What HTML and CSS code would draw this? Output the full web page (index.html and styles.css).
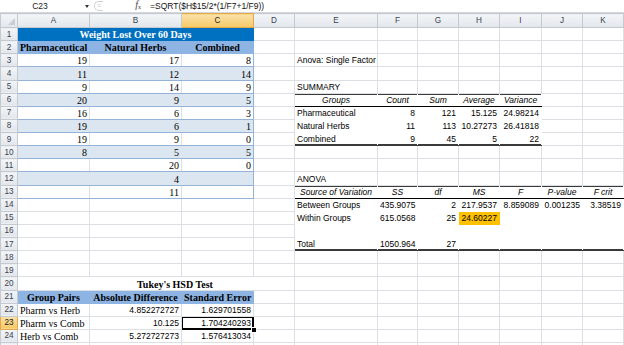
FILE: index.html
```html
<!DOCTYPE html>
<html>
<head>
<meta charset="UTF-8">
<title>Weight Lost Over 60 Days - ANOVA</title>
<link rel="stylesheet" href="styles.css">
</head>
<body>
<div class="fbar">
	<div class="namebox">C23<span class="drop"></span></div>
	<div class="fbtns"><span class="knob">=</span><span class="fx"><i>f</i><sub>x</sub></span></div>
	<div class="formula">=SQRT($H$15/2*(1/F7+1/F9))</div>
</div>
<table class="sheet">
	<colgroup>
		<col class="c-rh"><col class="c-a"><col class="c-b"><col class="c-c"><col class="c-d"><col class="c-e">
		<col class="c-f"><col class="c-n"><col class="c-n"><col class="c-i"><col class="c-n"><col class="c-n"><col class="c-l">
	</colgroup>
	<tr class="colhead">
		<th class="corner"></th><th>A</th><th>B</th><th class="sel">C</th><th>D</th><th>E</th><th>F</th><th>G</th><th>H</th><th>I</th><th>J</th><th>K</th><th></th>
	</tr>
	<tr>
		<th>1</th><td colspan="3" class="title">Weight Lost Over 60 Days</td><td></td><td></td><td></td><td></td><td></td><td></td><td></td><td></td><td></td>
	</tr>
	<tr>
		<th>2</th><td class="hd">Pharmaceutical</td><td class="hd">Natural Herbs</td><td class="hd">Combined</td><td></td><td></td><td></td><td></td><td></td><td></td><td></td><td></td><td></td>
	</tr>
	<tr>
		<th>3</th><td class="bw">19</td><td class="bw">17</td><td class="bw end">8</td><td></td><td class="txt">Anova: Single Factor</td><td></td><td></td><td></td><td></td><td></td><td></td><td></td>
	</tr>
	<tr>
		<th>4</th><td class="bb">11</td><td class="bb">12</td><td class="bb end">14</td><td></td><td></td><td></td><td></td><td></td><td></td><td></td><td></td><td></td>
	</tr>
	<tr>
		<th>5</th><td class="bw">9</td><td class="bw">14</td><td class="bw end">9</td><td></td><td class="txt">SUMMARY</td><td></td><td></td><td></td><td></td><td></td><td></td><td></td>
	</tr>
	<tr>
		<th>6</th><td class="bb">20</td><td class="bb">9</td><td class="bb end">5</td><td></td>
		<td class="rh">Groups</td><td class="rh">Count</td><td class="rh">Sum</td><td class="rh">Average</td><td class="rh">Variance</td><td></td><td></td><td></td>
	</tr>
	<tr>
		<th>7</th><td class="bw">16</td><td class="bw">6</td><td class="bw end">3</td><td></td>
		<td class="rt txt">Pharmaceutical</td><td class="rt">8</td><td class="rt">121</td><td class="rt">15.125</td><td class="rt">24.98214</td><td></td><td></td><td></td>
	</tr>
	<tr>
		<th>8</th><td class="bb">19</td><td class="bb">6</td><td class="bb end">1</td><td></td>
		<td class="rt txt">Natural Herbs</td><td class="rt">11</td><td class="rt">113</td><td class="rt">10.27273</td><td class="rt">26.41818</td><td></td><td></td><td></td>
	</tr>
	<tr>
		<th>9</th><td class="bw">19</td><td class="bw">9</td><td class="bw end">0</td><td></td>
		<td class="rt rf txt">Combined</td><td class="rt rf">9</td><td class="rt rf">45</td><td class="rt rf">5</td><td class="rt rf">22</td><td></td><td></td><td></td>
	</tr>
	<tr>
		<th>10</th><td class="bb">8</td><td class="bb">5</td><td class="bb end">5</td><td></td><td></td><td></td><td></td><td></td><td></td><td></td><td></td><td></td>
	</tr>
	<tr>
		<th>11</th><td class="bw"></td><td class="bw">20</td><td class="bw end">0</td><td></td><td></td><td></td><td></td><td></td><td></td><td></td><td></td><td></td>
	</tr>
	<tr>
		<th>12</th><td class="bb"></td><td class="bb">4</td><td class="bb end"></td><td></td><td class="txt">ANOVA</td><td></td><td></td><td></td><td></td><td></td><td></td><td></td>
	</tr>
	<tr>
		<th>13</th><td class="bw"></td><td class="bw">11</td><td class="bw end"></td><td></td>
		<td class="rh">Source of Variation</td><td class="rh">SS</td><td class="rh">df</td><td class="rh">MS</td><td class="rh">F</td><td class="rh">P-value</td><td class="rh">F crit</td><td></td>
	</tr>
	<tr>
		<th>14</th><td></td><td></td><td></td><td></td>
		<td class="rt txt">Between Groups</td><td class="rt">435.9075</td><td class="rt">2</td><td class="rt">217.9537</td><td class="rt">8.859089</td><td class="rt">0.001235</td><td class="rt">3.38519</td><td></td>
	</tr>
	<tr>
		<th>15</th><td></td><td></td><td></td><td></td>
		<td class="rt txt">Within Groups</td><td class="rt">615.0568</td><td class="rt">25</td><td class="rt hl">24.60227</td><td class="rt"></td><td class="rt"></td><td class="rt"></td><td></td>
	</tr>
	<tr>
		<th>16</th><td></td><td></td><td></td><td></td>
		<td class="rt"></td><td class="rt"></td><td class="rt"></td><td class="rt"></td><td class="rt"></td><td class="rt"></td><td class="rt"></td><td></td>
	</tr>
	<tr>
		<th>17</th><td></td><td></td><td></td><td></td>
		<td class="rt rf txt">Total</td><td class="rt rf">1050.964</td><td class="rt rf">27</td><td class="rt rf"></td><td class="rt rf"></td><td class="rt rf"></td><td class="rt rf"></td><td></td>
	</tr>
	<tr>
		<th>18</th><td></td><td></td><td></td><td></td><td></td><td></td><td></td><td></td><td></td><td></td><td></td><td></td>
	</tr>
	<tr>
		<th>19</th><td></td><td></td><td></td><td></td><td></td><td></td><td></td><td></td><td></td><td></td><td></td><td></td>
	</tr>
	<tr>
		<th>20</th><td colspan="4" class="merge">Tukey's HSD Test</td><td></td><td></td><td></td><td></td><td></td><td></td><td></td><td></td>
	</tr>
	<tr>
		<th>21</th><td class="hd">Group Pairs</td><td class="hd">Absolute Difference</td><td class="hd">Standard Error</td><td></td><td></td><td></td><td></td><td></td><td></td><td></td><td></td><td></td>
	</tr>
	<tr>
		<th>22</th><td class="lbl">Pharm vs Herb</td><td class="num">4.852272727</td><td class="num">1.629701558</td><td></td><td></td><td></td><td></td><td></td><td></td><td></td><td></td><td></td>
	</tr>
	<tr>
		<th class="sel">23</th><td class="lbl">Pharm vs Comb</td><td class="num">10.125</td><td class="num active">1.704240293</td><td></td><td></td><td></td><td></td><td></td><td></td><td></td><td></td><td></td>
	</tr>
	<tr>
		<th>24</th><td class="lbl">Herb vs Comb</td><td class="num">5.272727273</td><td class="num">1.576413034</td><td></td><td></td><td></td><td></td><td></td><td></td><td></td><td></td><td></td>
	</tr>
	<tr>
		<th></th><td></td><td></td><td></td><td></td><td></td><td></td><td></td><td></td><td></td><td></td><td></td><td></td>
	</tr>
</table>
</body>
</html>
```

FILE: styles.css
```css
html,body{margin:0;padding:0;background:#fff;overflow:hidden;}
body{
	width:624px;
	height:345px;
	font-family:"Liberation Sans",Arial,sans-serif;
	font-size:8.5px;
	color:#000;
}

/* formula bar */
.fbar{
	display:grid;
	grid-template-columns:92px 56px 1fr;
	height:13px;
	box-sizing:border-box;
	align-items:center;
	background:#fff;
	border-bottom:1px solid #d3d7dc;
}
.namebox{
	height:100%;
	display:flex;
	align-items:center;
	justify-content:center;
	position:relative;
	color:#222;
	padding-right:12px;
	box-sizing:border-box;
}
.drop{
	position:absolute;
	right:3px;
	top:5px;
	border-left:2px solid transparent;
	border-right:2px solid transparent;
	border-top:3px solid #333;
}
.fbtns{
	height:100%;
	display:flex;
	align-items:center;
	justify-content:space-between;
	padding:0 7px 0 2px;
	box-sizing:border-box;
}
.knob{
	width:9px;
	height:10px;
	border:1px solid #cfd3d8;
	border-right:0;
	border-radius:6px 0 0 6px;
	box-sizing:border-box;
	color:#c6c9cd;
	font-size:7px;
	line-height:8px;
	text-align:center;
}
.fx{
	font-family:"Liberation Serif",serif;
	font-size:10px;
	color:#444;
	line-height:10px;
}
.fx sub{font-size:6px;vertical-align:-1px;}
.formula{
	min-width:0;
	padding-left:2px;
	color:#111;
	white-space:nowrap;
	overflow:hidden;
}

/* grid */
.sheet{
	border-collapse:collapse;
	table-layout:fixed;
	width:643px;
}
.c-rh{width:17px;}
.c-a{width:72px;}
.c-b{width:92px;}
.c-c{width:72px;}
.c-d{width:41px;}
.c-e{width:83px;}
.c-f{width:40px;}
.c-n{width:41px;}
.c-i{width:42px;}
.c-l{width:20px;}

.sheet tr{height:13.14px;}
.sheet tr.colhead{height:14px;}
.sheet td,.sheet th{
	padding:0 2px;
	border:1px solid #dcdfe3;
	white-space:nowrap;
	overflow:visible;
	vertical-align:bottom;
	line-height:11px;
	box-sizing:border-box;
}
.sheet th{
	background:linear-gradient(#f3f5f8,#e2e6eb);
	border-color:#c5cad1;
	font-weight:normal;
	color:#3a4350;
	text-align:center;
	vertical-align:middle;
	padding:0;
	font-size:8.2px;
}
.sheet th.sel{
	background:linear-gradient(#fbe2aa,#f5c965);
	border-color:#e3a94a;
	color:#222;
}
.sheet .corner{position:relative;}
.sheet .corner:after{
	content:"";
	position:absolute;
	right:2px;
	bottom:2px;
	border-left:7px solid transparent;
	border-bottom:7px solid #c9ced5;
}

/* weight lost table */
.sheet .title{
	background:#0070c0;
	border-color:#0070c0;
	color:#fff;
	font:bold 10px/11px "Liberation Serif","Times New Roman",serif;
	text-align:center;
}
.sheet .hd{
	background:#8db4e2;
	border-color:#8db4e2;
	font:bold 10px/11px "Liberation Serif","Times New Roman",serif;
	text-align:center;
}
.sheet .bw,.sheet .bb{
	font:10px/11px "Liberation Serif","Times New Roman",serif;
	text-align:right;
	border-top:1px solid #95b3d7;
	border-bottom:1px solid #95b3d7;
}
.sheet .bb{
	background:#dce6f1;
	border-left-color:#dce6f1;
	border-right-color:#dce6f1;
}
.sheet .end{border-right:1px solid #95b3d7;}
.sheet .merge{
	font:bold 10px/11px "Liberation Serif","Times New Roman",serif;
	text-align:center;
	padding-left:40px;
}
.sheet .lbl{font:10px/11px "Liberation Serif","Times New Roman",serif;}
.sheet .num{text-align:right;}
.sheet .active{
	position:relative;
	border:1px solid #000;
	box-shadow:inset 0 0 0 1px #000;
}
.sheet .active:after{
	content:"";
	position:absolute;
	right:-4px;
	bottom:-4px;
	width:4px;
	height:4px;
	background:#000;
	border:1px solid #fff;
}

/* anova output */
.sheet .txt{text-align:left;}
.sheet .rh{
	background:#fff;
	font-style:italic;
	text-align:center;
	border-left-color:#fff;
	border-right-color:#fff;
	border-top:1px solid #3a3a3a;
	box-shadow:inset 0 1px 0 #3a3a3a;
	border-bottom:1px solid #000;
}
.sheet .rt{
	background:#fff;
	text-align:right;
	border-color:#fff;
}
.sheet .rt.txt{text-align:left;}
.sheet .rf{
	border-bottom:1px solid #3a3a3a;
	box-shadow:inset 0 -1px 0 #3a3a3a;
}
.sheet .hl{background:#ffc000;border-color:#ffc000;}
```
